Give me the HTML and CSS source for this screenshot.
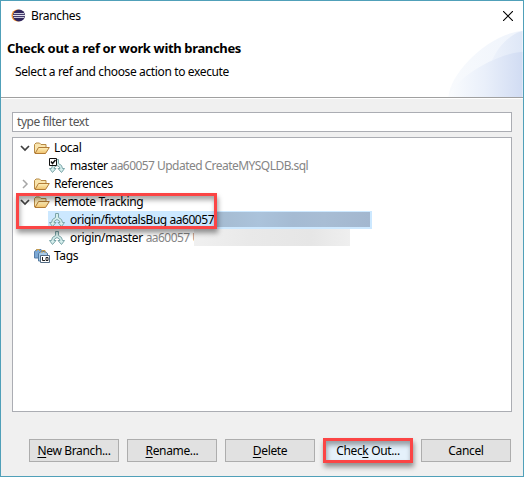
FILE: index.html
```html
<!DOCTYPE html>
<html lang="en">
<head>
<meta charset="utf-8">
<title>Branches</title>
<link rel="stylesheet" href="styles.css">
</head>
<body>
<svg class="defs" width="0" height="0" aria-hidden="true">
  <defs>
    <linearGradient id="gold" x1="0" y1="0" x2="0" y2="1"><stop offset="0" stop-color="#fff2bd"/><stop offset="1" stop-color="#efc06b"/></linearGradient>
    <symbol id="folder" viewBox="0 0 16 16">
      <path d="M.500 13V4.500L2 3h3.500L7 4.500h5V7" fill="#f9e5ae" stroke="#b78a45"/>
      <path d="M1 13.500L4.500 7.500H15.300L11.500 13.500Z" fill="url(#gold)" stroke="#b27b35"/>
    </symbol>
    <symbol id="branch" viewBox="0 0 16 16">
      <path d="M6.500 1.500h3v4l3 2 1 3h2L12.500 14.500 9 10.500h2L10.500 9 8 7.500 5.500 9 5 10.500h2L3.500 14.500.500 10.500h2l1-3 3-2Z" fill="#d5eeec" stroke="#7ba5a9" stroke-width="1"/>
    </symbol>
    <symbol id="open" viewBox="0 0 10 10"><path d="M1 3l4 4 4-4" fill="none" stroke="#404040" stroke-width="1.700"/></symbol>
    <symbol id="closed" viewBox="0 0 10 10"><path d="M3 1l4 4-4 4" fill="none" stroke="#a6a6a6" stroke-width="1.500"/></symbol>
  </defs>
</svg>
<main class="dialog">
  <header class="header">
    <svg class="swoosh" viewBox="0 0 75 67">
      <defs>
        <linearGradient id="s1"><stop offset="0" stop-color="#f8fafd"/><stop offset="1" stop-color="#eff4fc"/></linearGradient>
        <linearGradient id="s2"><stop offset="0" stop-color="#edf2fb"/><stop offset="1" stop-color="#dee7f7"/></linearGradient>
        <linearGradient id="s3"><stop offset="0" stop-color="#fafcfe"/><stop offset=".5" stop-color="#e9effa"/><stop offset="1" stop-color="#d1dcf3"/></linearGradient>
      </defs>
      <path d="M0 67C1 42 42 2 75 0V67Z" fill="url(#s1)"/>
      <path d="M44 30C50 16 61 4 75 0V67Z" fill="url(#s2)"/>
      <path d="M0 67C3 52 43 24 75 21V67Z" fill="url(#s3)"/>
    </svg>
    <div class="titlebar">
      <svg class="logo" viewBox="0 0 16 16"><circle cx="7" cy="8" r="6.500" fill="#f79430"/><circle cx="8.500" cy="8" r="6.500" fill="#30265c"/><path d="M3 6h11M2 8h13M3 10h11" stroke="#eeeef6"/></svg>
      <span class="title">Branches</span>
      <svg class="close" viewBox="0 0 10 10"><path d="M0 0l10 10M10 0L0 10" stroke="#000" stroke-width="1.100"/></svg>
    </div>
    <h1 class="heading">Check out a ref or work with branches</h1>
    <p class="description">Select a ref and choose action to execute</p>
  </header>
  <section class="content">
    <div class="filter">type filter text</div>
    <div class="tree">
      <div class="row"><svg class="arrow"><use href="#open"/></svg><svg class="icon"><use href="#folder"/></svg><span>Local</span></div>
      <div class="row child"><svg class="icon" viewBox="0 0 16 16"><use href="#branch"/><path d="M.500.500h7v7h-7z" fill="#fff" stroke="#111"/><path d="M2 3.500l1.500 2L6.500 2" fill="none" stroke="#111" stroke-width="1.500"/></svg><span class="ref">master <span class="muted message">aa60057 Updated CreateMYSQLDB.sql</span></span></div>
      <div class="row"><svg class="arrow"><use href="#closed"/></svg><svg class="icon"><use href="#folder"/></svg><span>References</span></div>
      <div class="row"><svg class="arrow"><use href="#open"/></svg><svg class="icon"><use href="#folder"/></svg><span>Remote Tracking</span></div>
      <div class="row child selected"><svg class="icon"><use href="#branch"/></svg><span class="ref tight">origin/fixtotalsBug aa60057</span><i class="redacted"></i></div>
      <div class="row child"><svg class="icon"><use href="#branch"/></svg><span class="ref">origin/master <span class="muted message">aa60057 U</span></span><i class="redacted pale"></i></div>
      <div class="row"><i class="arrow"></i><svg class="icon" viewBox="0 0 16 16">
        <path d="M.500 10V3.500L3 1.500h4l1.500 2V10z" fill="#7ba8d5" stroke="#597da8"/>
        <path d="M4.500 13V5.500L7 3.500h4l2.500 2V13z" fill="#a8cbe9" stroke="#53799e"/>
        <path d="M2.500 3V1.500h3V3M8 5V2.500h3V5" fill="none" stroke="#c79d4c"/>
        <path d="M6.500 7.500h9v7h-9z" fill="#fff" stroke="#536b83"/><path d="M8.500 9v3.500H11M12 9.500h2v3h-2z" fill="none" stroke="#222"/></svg><span>Tags</span></div>
      <div class="callout tracking"></div>
    </div>
    <footer class="buttons">
      <button><span><u>N</u>ew Branch...</span></button>
      <button><span><u>R</u>ename...</span></button>
      <button><span><u>D</u>elete</span></button>
      <button class="primary"><span>Chec<u>k</u> Out...</span><i class="callout"></i></button>
      <button><span>Cancel</span></button>
    </footer>
  </section>
</main>
</body>
</html>
```
FILE: styles.css
```css
* { box-sizing: border-box; }
body { margin: 0; font: 12px/18px "Noto Sans", "Open Sans", sans-serif; letter-spacing: -.35px; color: #000; }
.defs { position: absolute; }
.dialog { width: 524px; height: 477px; border: 1px solid #50a0b9; background: #f0f0f0; }
.header { position: relative; height: 98px; background: #fff; border-bottom: 1px solid #fff; box-shadow: inset 0 -1px #a0a0a0; }
.swoosh { position: absolute; right: 0; bottom: 1px; width: 75px; height: 66px; }
.titlebar { display: flex; align-items: center; height: 29px; padding: 0 10px; }
.logo { width: 15px; height: 15px; margin-right: 5px; }
.close { width: 10px; height: 10px; margin-left: auto; }
.heading { margin: 9px 0 0 6px; font-size: 13px; line-height: 18px; letter-spacing: -.35px; }
.description { margin: 6px 0 0 14px; line-height: 18px; letter-spacing: -.37px; }
.content { padding: 13px 11px 0; }
.filter { height: 20px; padding: 0 4px; border: 1px solid #abadb3; background: #fff; color: #555; letter-spacing: -.45px; }
.tree { position: relative; height: 275px; margin-top: 5px; padding-top: 1px; border: 1px solid #abadb3; background: #fff; }
.row { display: flex; align-items: center; height: 18px; padding-left: 7px; white-space: nowrap; }
.row.child { margin-left: 35px; padding-left: 1px; position: relative; }
.arrow { width: 10px; height: 10px; margin-right: 4px; }
.icon { width: 16px; height: 16px; margin-right: 4px; }
.child .icon { margin-right: 5px; }
.muted { color: #858585; }
.message { letter-spacing: -.54px; }
.tight { letter-spacing: -.45px; }
.row.selected { width: 324px; background: #cce8ff; }
.redacted { position: absolute; left: 168px; right: 2px; top: 1px; bottom: 2px; background: linear-gradient(90deg, #a5bbd1, #abc3db 28%, #a5bbd3 50%, #a8bdd4 70%, #a3b7cf); }
.redacted.pale { left: 146px; right: auto; width: 156px; top: 0; bottom: 1px; background: linear-gradient(90deg, #f0f0f0, #e9e9e9 35%, #e6e6e6 75%, #efefef); }
.callout { position: absolute; border: 3px solid #fb4545; box-shadow: 1px 4px 5px rgba(0,0,0,.4), inset 1px 4px 5px rgba(0,0,0,.35); }
.tracking { left: 3px; top: 55px; width: 201px; height: 36px; }
.buttons { display: flex; gap: 8px; justify-content: flex-end; margin: 27px 1px 0 0; }
button { position: relative; width: 90px; height: 23px; padding: 0; border: 1px solid #adadad; background: #e1e1e1; font: inherit; letter-spacing: inherit; color: #000; }
.primary { background: #e5f1fb; }
.primary .callout { inset: -2px -1px; }
u { text-underline-offset: 2px; }
```
